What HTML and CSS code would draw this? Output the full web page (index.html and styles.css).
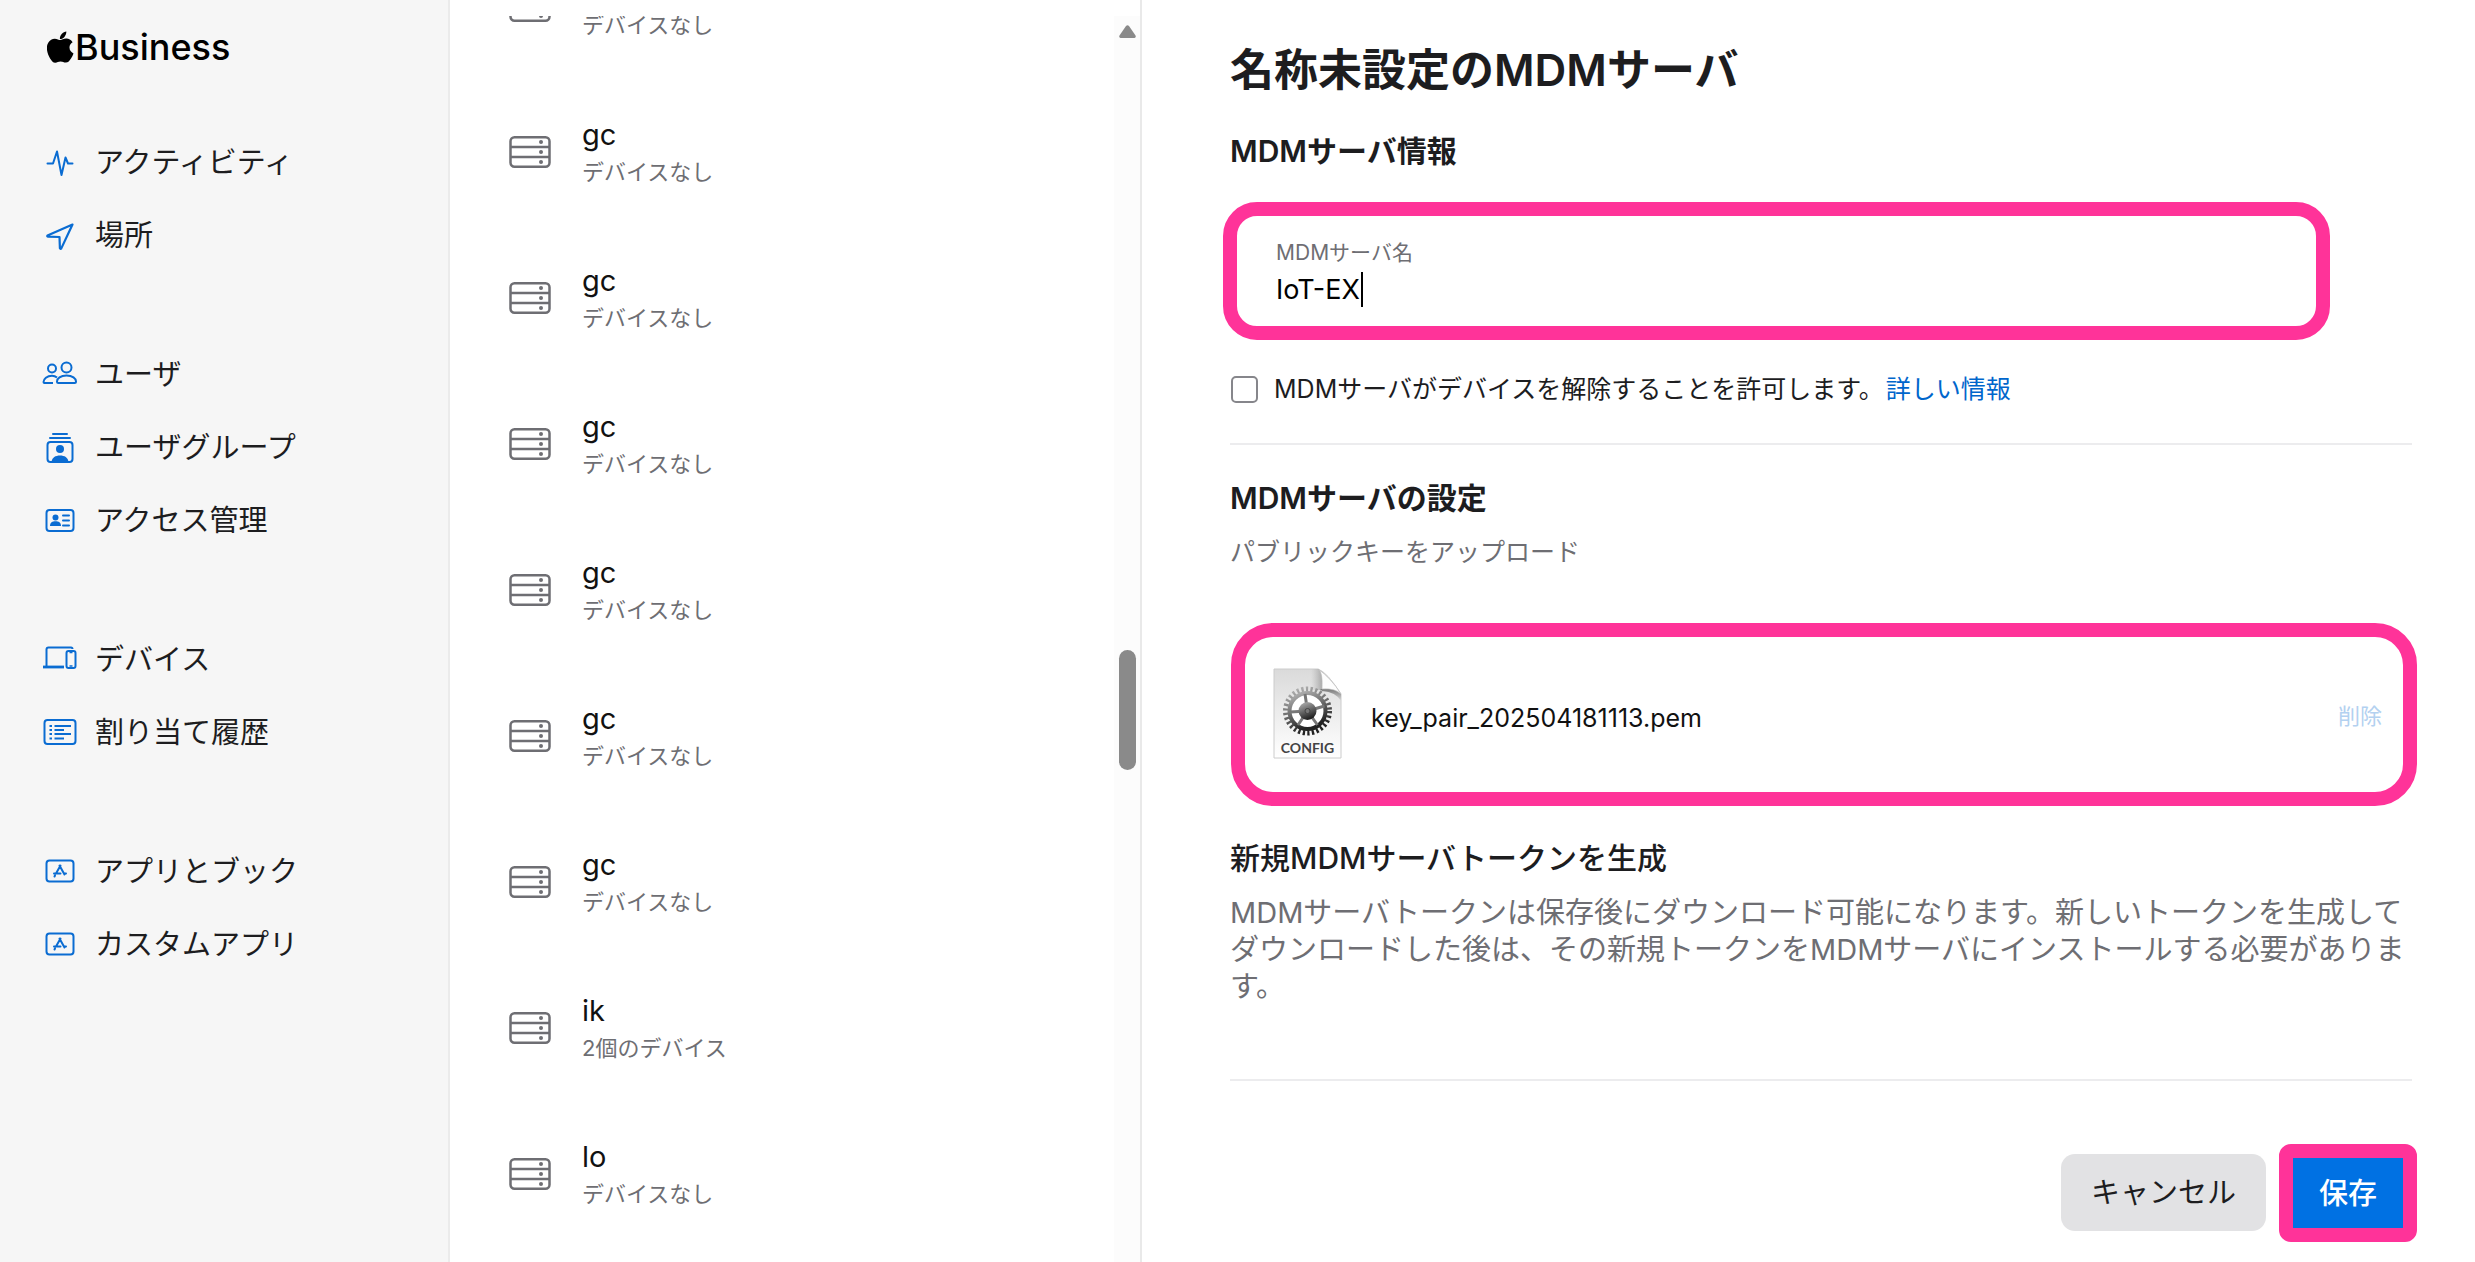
FILE: index.html
```html
<!DOCTYPE html>
<html lang="ja">
<head>
<meta charset="utf-8">
<meta name="viewport" content="width=device-width, initial-scale=1">
<title>Business</title>
<link rel="stylesheet" href="styles.css">
</head>
<body>
<svg class="defs" aria-hidden="true">
  <symbol id="server" viewBox="0 0 42 32">
    <g fill="none" stroke="currentColor" stroke-width="2.500"><rect x="1.500" y="1.250" width="39" height="29.500" rx="4"/><path d="M2 11h38M2 21h38"/></g>
    <g fill="currentColor"><circle cx="32" cy="6" r="2"/><circle cx="32" cy="16" r="2"/><circle cx="32" cy="26" r="2"/></g>
  </symbol>
  <symbol id="app" viewBox="0 0 36 36">
    <g fill="none" stroke="currentColor" stroke-width="2" stroke-linecap="round"><rect x="4.500" y="7.500" width="27" height="21" rx="3"/><path d="M18.500 12.500l-4.500 8M17.500 12.500l5 9M12 20.500h6.500M22 20.500h2M13 22.500l-.5 1"/></g>
  </symbol>
</svg>
<div class="app">
  <nav class="sidebar">
    <a class="brand" href="#">
      <svg class="apple" viewBox="0 0 27 32"><path fill="currentColor" d="M19.300.5c.2 2-.6 3.900-1.700 5.200-1.200 1.400-3 2.400-4.700 2.300-.2-1.900.7-3.800 1.800-5C15.900 1.600 17.900.6 19.300.5zM25.600 11.200c-2 1.200-3.200 3-3.100 5.400 0 2.800 1.600 4.800 4 5.800-.5 1.700-1.400 3.400-2.500 5-1.400 2.100-2.900 4.200-5.100 4.200-2.200.1-2.900-1.200-5.300-1.200-2.500 0-3.200 1.200-5.300 1.300-2.200.1-3.800-2.200-5.200-4.300C.4 23.300-1.700 15.800 1.400 11.500c1.400-2.300 3.800-3.700 6.400-3.800 2.200 0 4.200 1.400 5.500 1.400s3.700-1.700 6.200-1.500c2.200.1 4.600 1.200 6.100 3.600z"/></svg>
      <span>Business</span>
    </a>
    <ul class="group">
      <li><a href="#"><svg class="icon" viewBox="0 0 36 36" fill="none" stroke="currentColor" stroke-width="2" stroke-linejoin="round" stroke-linecap="round"><path d="M5.500 19.500H11L15 7.500 19.500 31l4-17.500 2.500 6h4.500"/></svg><span>アクティビティ</span></a></li>
      <li><a href="#"><svg class="icon" viewBox="0 0 36 36" fill="none" stroke="currentColor" stroke-width="2.200" stroke-linejoin="round"><path d="M30.500 7.500L5.500 18.500q-.8.900.4 1.100l11.600.4.400 11.200q.6 1.100 1.400.2L30.500 7.500z"/></svg><span>場所</span></a></li>
    </ul>
    <ul class="group">
      <li><a href="#"><svg class="icon" viewBox="0 0 36 36" fill="none" stroke="currentColor" stroke-width="2"><circle cx="10" cy="12.500" r="4"/><circle cx="24.500" cy="11.500" r="5"/><path d="M15 21.500c-1.500-1.300-3-1.800-5-1.800-5 0-8.500 3.400-8.500 6.300q0 1 1 1H11M24.500 19.500c-6 0-9.500 3-9.500 6q0 1.500 1.500 1.500h16q1.500 0 1.500-1.500c0-3-3.500-6-9.500-6z"/></svg><span>ユーザ</span></a></li>
      <li><a href="#"><svg class="icon" viewBox="0 0 36 36" fill="none" stroke="currentColor" stroke-width="2" stroke-linecap="round"><path d="M11 5h14M8 9h20"/><rect x="5.500" y="13" width="25" height="20" rx="3"/><g fill="currentColor" stroke="none"><circle cx="18" cy="20" r="4"/><path d="M9.500 33c.5-4.500 4-6.500 8.500-6.500s8 2 8.500 6.500z"/></g></svg><span>ユーザグループ</span></a></li>
      <li><a href="#"><svg class="icon" viewBox="0 0 36 36" fill="none" stroke="currentColor" stroke-width="2" stroke-linecap="round"><rect x="4.500" y="8" width="27" height="21" rx="3"/><path d="M21 13.500h6M21 18.500h6M21 23.500h6"/><g fill="currentColor" stroke="none"><circle cx="13.500" cy="15.500" r="3"/><path d="M8 24c0-3.500 2.300-4.800 5.500-4.800S19 20.500 19 24z"/></g></svg><span>アクセス管理</span></a></li>
    </ul>
    <ul class="group">
      <li><a href="#"><svg class="icon" viewBox="0 0 36 36" fill="none" stroke="currentColor" stroke-width="2"><path d="M4.500 26V8.500q0-2 2-2H29q1.500 0 1.500 1.500"/><path d="M1 26h21" stroke-width="2.800"/><rect x="24.500" y="10" width="9" height="17" rx="2"/><path d="M27.500 11.500h3M27.500 25h3" stroke-width="1.500"/></svg><span>デバイス</span></a></li>
      <li><a href="#"><svg class="icon" viewBox="0 0 36 36" fill="none" stroke="currentColor" stroke-width="2"><rect x="2.500" y="6" width="31" height="24" rx="3"/><path d="M7.500 12h2.500M7.500 16h2.500M7.500 20h2.500M7.500 24.500h2.500M12.500 12H29M12.500 16H22M12.500 20H29M12.500 24.500H22" stroke-width="1.800"/></svg><span>割り当て履歴</span></a></li>
    </ul>
    <ul class="group">
      <li><a href="#"><svg class="icon"><use href="#app"/></svg><span>アプリとブック</span></a></li>
      <li><a href="#"><svg class="icon"><use href="#app"/></svg><span>カスタムアプリ</span></a></li>
    </ul>
  </nav>

  <section class="servers">
    <div class="viewport">
      <ul class="list">
        <li><svg class="server"><use href="#server"/></svg><div><p>デバイスなし</p></div></li>
        <li><svg class="server"><use href="#server"/></svg><div><h3>gc</h3><p>デバイスなし</p></div></li>
        <li><svg class="server"><use href="#server"/></svg><div><h3>gc</h3><p>デバイスなし</p></div></li>
        <li><svg class="server"><use href="#server"/></svg><div><h3>gc</h3><p>デバイスなし</p></div></li>
        <li><svg class="server"><use href="#server"/></svg><div><h3>gc</h3><p>デバイスなし</p></div></li>
        <li><svg class="server"><use href="#server"/></svg><div><h3>gc</h3><p>デバイスなし</p></div></li>
        <li><svg class="server"><use href="#server"/></svg><div><h3>gc</h3><p>デバイスなし</p></div></li>
        <li><svg class="server"><use href="#server"/></svg><div><h3>ik</h3><p>2個のデバイス</p></div></li>
        <li><svg class="server"><use href="#server"/></svg><div><h3>lo</h3><p>デバイスなし</p></div></li>
      </ul>
    </div>
    <div class="track" aria-hidden="true">
      <svg class="arrow" viewBox="0 0 17 13"><path fill="#8a8a8a" d="M7 1q1.500-1.500 3 0l6.500 9.500q.8 2-1 2.500h-14q-1.800-.5-1-2.500z"/></svg>
      <div class="before"></div>
      <div class="thumb"></div>
      <div class="after"></div>
    </div>
  </section>

  <main class="detail">
    <h1>名称未設定のMDMサーバ</h1>
    <h2>MDMサーバ情報</h2>
    <div class="field">
      <label for="name">MDMサーバ名</label>
      <div class="entry"><input id="name" type="text" value="IoT-EX" size="6"><span class="caret"></span></div>
    </div>
    <div class="check">
      <input id="release" type="checkbox">
      <label for="release">MDMサーバがデバイスを解除することを許可します。</label><a href="#">詳しい情報</a>
    </div>
    <hr>
    <h2>MDMサーバの設定</h2>
    <p class="hint">パブリックキーをアップロード</p>
    <div class="file">
      <svg class="config" viewBox="0 0 69 91">
        <defs>
          <linearGradient id="paper" x1="0" y1="0" x2="0" y2="1"><stop offset="0" stop-color="#dadada"/><stop offset="1" stop-color="#fff"/></linearGradient>
          <linearGradient id="metal" x1="0" y1="0" x2="0.400" y2="1"><stop offset="0" stop-color="#bbb"/><stop offset="0.500" stop-color="#707070"/><stop offset="1" stop-color="#222"/></linearGradient>
          <linearGradient id="shade" x1="0" y1="0" x2="0" y2="1"><stop offset="0" stop-color="#777"/><stop offset="1" stop-color="#ddd"/></linearGradient>
          <linearGradient id="side" x1="0" y1="0" x2="1" y2="0"><stop offset="0" stop-color="#bbb" stop-opacity="0"/><stop offset="1" stop-color="#aaa"/></linearGradient>
        </defs>
        <path d="M1 1h44q9 3 23 25v64H1z" fill="url(#paper)" stroke="#ccc"/>
        <path d="M38 1h7l4 3v18H38z" fill="url(#side)"/>
        <path d="M47 21q15-1 21 5v7q-5-9-19-10z" fill="url(#shade)"/>
        <path d="M45 1q5 3 4 20 13-1 19 5Q58 10 45 1z" fill="#fdfdfd" stroke="#bbb" stroke-width=".7"/>
        <circle cx="34.500" cy="43" r="16" fill="#fff"/>
        <g fill="none" stroke="url(#metal)">
          <circle cx="34.500" cy="43" r="22" stroke-width="5" stroke-dasharray="2.300 2.308"/>
          <circle cx="34.500" cy="43" r="18" stroke-width="4"/>
        </g>
        <g stroke="#777" stroke-width="3"><path d="M34.500 43L32 26M34.500 43L17 44M34.500 43l17-5M34.500 43l10 14M34.500 43L25 57"/></g>
        <circle cx="34.500" cy="43" r="9" fill="url(#metal)"/><circle cx="34.500" cy="43" r="2.500" fill="#777" stroke="#444"/>
        <text x="34.500" y="85" text-anchor="middle">CONFIG</text>
      </svg>
      <span class="filename">key_pair_202504181113.pem</span>
      <button class="remove" type="button" disabled>削除</button>
    </div>
    <h2 class="token">新規MDMサーバトークンを生成</h2>
    <p class="note">MDMサーバトークンは保存後にダウンロード可能になります。新しいトークンを生成してダウンロードした後は、その新規トークンをMDMサーバにインストールする必要があります。</p>
    <hr>
    <div class="actions">
      <button class="cancel" type="button">キャンセル</button>
      <button class="save" type="submit">保存</button>
    </div>
  </main>
</div>
</body>
</html>
```
FILE: styles.css
```css
* { box-sizing: border-box; margin: 0; padding: 0; }
body {
  font-family: Inter, "Noto Sans CJK JP", sans-serif;
  color: #1d1d1f;
  background: #fff;
}
ul { list-style: none; }
a { color: #0066cc; text-decoration: none; }
button, input { font: inherit; border: 0; }
.defs { display: none; }

.app {
  display: grid;
  grid-template-columns: 450px 692px 1fr;
  height: 100vh;
  overflow: hidden;
}

/* Sidebar */
.sidebar { background: #f6f6f6; border-right: 2px solid #ebebeb; }
.brand {
  display: flex;
  align-items: center;
  gap: 1px;
  height: 94px;
  padding-left: 47px;
  margin-bottom: 31px;
  color: #000;
  font-size: 36px;
  font-weight: 500;
}
.apple { width: 27px; height: 32px; }
.group { margin-bottom: 66px; }
.group a {
  display: flex;
  align-items: center;
  gap: 17px;
  height: 73px;
  padding-left: 42px;
  color: #1d1d1f;
  font-size: 29px;
}
.group span { padding-bottom: 4px; }
.icon { width: 36px; height: 36px; color: #0a6cd2; }

/* Server list */
.servers { display: flex; padding-top: 16px; border-right: 2px solid #e9e9e9; overflow: hidden; }
.viewport { flex: 1; overflow: hidden; }
.list { margin-top: -83px; }
.list li { display: flex; align-items: center; gap: 31px; height: 146px; padding-left: 59px; }
.list li:first-child p { margin-top: 38px; }
.server { width: 42px; height: 32px; color: #6e6e73; }
.list h3 { font-size: 29px; font-weight: 400; line-height: 40px; color: #111; }
.list p { font-size: 22px; line-height: 34px; color: #6e6e73; }
.track {
  display: flex;
  flex-direction: column;
  align-items: center;
  width: 26px;
  padding-top: 9px;
  background: #fcfcfc;
}
.arrow { width: 17px; height: 13px; }
.before { flex: 611; }
.thumb { width: 17px; height: 120px; border-radius: 9px; background: #8a8a8a; }
.after { flex: 491; }

/* Detail pane */
.detail { padding: 37px 63px 0 88px; }
h1 { font-size: 44px; line-height: 66px; font-weight: 600; }
h2 { font-size: 30px; line-height: 44px; font-weight: 600; }
h1 + h2 { margin-top: 26px; }
.field {
  width: calc(100% - 75px);
  margin: 29px 0 0 -7px;
  padding: 21px 39px;
  border: 14px solid #ff3399;
  border-radius: 34px;
}
.field label { display: block; font-size: 21px; line-height: 32px; color: #6e6e73; }
.entry { display: flex; align-items: center; height: 36px; padding-top: 4px; }
.entry input { width: 85px; font-size: 27px; color: #000; background: none; outline: 0; }
.caret { width: 2px; height: 35px; background: #000; }
.check { display: flex; align-items: center; height: 36px; margin: 31px 0 36px; font-size: 25px; }
.check input {
  appearance: none;
  width: 27px;
  height: 27px;
  margin: 0 16px 0 1px;
  border: 2px solid #86868b;
  border-radius: 5px;
}
.check label, .check a { padding-bottom: 4px; }
.check a { margin-left: 2px; }
hr { border: 0; height: 2px; background: #ececee; }
hr + h2 { margin-top: 31px; }
.hint { margin-top: 14px; font-size: 25px; line-height: 36px; color: #6e6e73; }
.file {
  display: flex;
  align-items: center;
  margin: 53px -5px 0 1px;
  padding: 31px 21px 33px 28px;
  border: 14px solid #ff3399;
  border-radius: 42px;
}
.config { width: 69px; height: 91px; }
.config text { font: 700 14px Lato, sans-serif; fill: #444; }
.filename { flex: 1; margin-left: 29px; padding-top: 8px; font-size: 25px; color: #111; }
.remove { font-size: 22px; color: #b3d1f0; background: none; }
.token { margin-top: 30px; font-weight: 500; }
.note { margin-top: 14px; font-size: 29px; line-height: 37px; color: #6e6e73; }
.note + hr { margin-top: 74px; }
.actions { display: flex; justify-content: flex-end; align-items: center; gap: 13px; margin: 63px -5px 0 0; }
.cancel {
  height: 77px;
  margin-bottom: 2px;
  padding: 0 30px 4px;
  border-radius: 14px;
  background: #e2e2e4;
  color: #1d1d1f;
  font-size: 29px;
}
.save {
  height: 98px;
  padding: 0 26px 5px;
  border: 14px solid #ff3399;
  border-radius: 12px;
  background: #0071e3;
  color: #fff;
  font-size: 29px;
  font-weight: 500;
}
```
